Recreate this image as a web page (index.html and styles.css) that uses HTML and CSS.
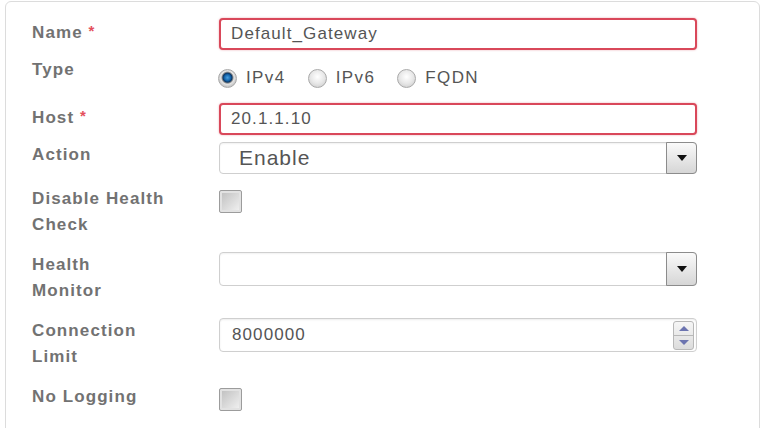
FILE: index.html
```html
<!DOCTYPE html>
<html lang="en">
<head>
    <meta charset="UTF-8">
    <meta name="viewport" content="width=device-width, initial-scale=1.0">
    <link rel="stylesheet" href="styles.css">
    <title>Server</title>
</head>
<body>
    <div class="panel">
        <form class="form">
            <div class="row">
                <label class="label">Name <span class="req">*</span></label>
                <input type="text" class="field error" value="Default_Gateway">
            </div>

            <div class="row">
                <label class="label">Type</label>
                <div class="radios">
                    <label class="radio"><input type="radio" name="type" checked>IPv4</label>
                    <label class="radio"><input type="radio" name="type">IPv6</label>
                    <label class="radio"><input type="radio" name="type">FQDN</label>
                </div>
            </div>

            <div class="row">
                <label class="label">Host <span class="req">*</span></label>
                <input type="text" class="field error" value="20.1.1.10">
            </div>

            <div class="row spaced">
                <label class="label">Action</label>
                <div class="select">
                    <span class="select-text">Enable</span>
                    <span class="select-btn"><span class="arrow"></span></span>
                </div>
            </div>

            <div class="row">
                <label class="label tall">Disable Health<br>Check</label>
                <input type="checkbox" class="check">
            </div>

            <div class="row">
                <label class="label tall">Health<br>Monitor</label>
                <div class="select big">
                    <span class="select-text"></span>
                    <span class="select-btn"><span class="arrow"></span></span>
                </div>
            </div>

            <div class="row">
                <label class="label tall">Connection<br>Limit</label>
                <div class="number">
                    <input type="text" class="number-input" value="8000000">
                    <span class="spin">
                        <span class="spin-up"></span>
                        <span class="spin-down"></span>
                    </span>
                </div>
            </div>

            <div class="row">
                <label class="label">No Logging</label>
                <input type="checkbox" class="check">
            </div>
        </form>
    </div>
</body>
</html>
```

FILE: styles.css
```css
*{
    box-sizing: border-box;
    font-family: "Liberation Sans", Arial, Helvetica, sans-serif;
}

:root{
    --label-color: #727272;
    --text-color: #555;
    --border-color: #cfcfcf;
    --error-color: #d9485a;
}

body{
    margin: 0px;
    background-color: white;
}

.panel{
    margin: 1px 3px 0 5px;
    height: 440px;
    border: 1px solid #dcdcdc;
    border-radius: 6px;
    padding: 16px 0 0 26px;
}

.row{
    display: flex;
    align-items: flex-start;
    margin-bottom: 7px;
}

.row.spaced{
    margin-bottom: 12px;
}

.label{
    width: 187px;
    flex: none;
    font-size: 17px;
    font-weight: bold;
    line-height: 26px;
    letter-spacing: 1.1px;
    color: var(--label-color);
}

.label.tall{
    padding-bottom: 7px;
}

.req{
    color: #e4505c;
    font-size: 15px;
    vertical-align: 2px;
}

.field{
    width: 478px;
    height: 32px;
    border: 1px solid var(--border-color);
    border-radius: 4px;
    padding: 0 11px;
    font-size: 17px;
    letter-spacing: 1.1px;
    color: var(--text-color);
    background-color: white;
    box-shadow: inset 0 1px 2px rgba(0, 0, 0, 0.08);
    outline: none;
}

.field.error{
    border: 2px solid var(--error-color);
    padding-left: 10px;
    box-shadow: 0 0 2px rgba(217, 72, 90, 0.5);
}

/* radio group */
.radios{
    display: flex;
    gap: 22px;
    margin: 11px 0 8px -1px;
}

.radio{
    display: flex;
    align-items: center;
    gap: 9px;
    height: 20px;
    font-size: 17px;
    letter-spacing: 1.4px;
    color: var(--text-color);
}

.radio input{
    appearance: none;
    -webkit-appearance: none;
    margin: 0;
    width: 19px;
    height: 19px;
    border-radius: 50%;
    border: 1px solid #a9a9a9;
    background: radial-gradient(circle at 50% 40%, #ffffff 0, #e8e8e8 50%, #c6c6c6 100%);
}

.radio input:checked{
    background: radial-gradient(circle at 50% 45%, #4aa0e0 0, #1667ad 3px, #0c3866 4.5px, #8e8e8e 5.5px, #e6e6e6 6.5px, #c0c0c0 9.5px);
}

/* select */
.select{
    width: 478px;
    height: 32px;
    display: flex;
    align-items: center;
    justify-content: space-between;
    border: 1px solid var(--border-color);
    border-radius: 4px;
    background-color: white;
    box-shadow: inset 0 1px 2px rgba(0, 0, 0, 0.06);
}

.select.big{
    height: 34px;
}

.select-text{
    padding-left: 19px;
    font-size: 21px;
    letter-spacing: 1px;
    color: var(--text-color);
}

.select-btn{
    align-self: stretch;
    width: 31px;
    margin: -1px -1px -1px 0;
    display: flex;
    align-items: center;
    justify-content: center;
    border: 1px solid #8c8c8c;
    border-radius: 0 4px 4px 0;
    background: linear-gradient(#fafafa, #d6d6d6);
}

.arrow{
    width: 0;
    height: 0;
    border-left: 5px solid transparent;
    border-right: 5px solid transparent;
    border-top: 6px solid #111;
}

/* number input */
.number{
    width: 478px;
    height: 34px;
    display: flex;
    align-items: center;
    border: 1px solid var(--border-color);
    border-radius: 4px;
    box-shadow: inset 0 1px 2px rgba(0, 0, 0, 0.08);
}

.number-input{
    flex: 1;
    border: none;
    outline: none;
    background: transparent;
    padding-left: 12px;
    font-size: 17px;
    letter-spacing: 1.1px;
    color: var(--text-color);
}

.spin{
    width: 21px;
    height: 29px;
    margin-right: 2px;
    display: flex;
    flex-direction: column;
    border: 1px solid #b8b8b8;
    border-radius: 3px;
    background: linear-gradient(#f6f6f6, #dcdcdc);
}

.spin-up,
.spin-down{
    flex: 1;
    display: flex;
    align-items: center;
    justify-content: center;
}

.spin-up{
    border-bottom: 1px solid #b8b8b8;
}

.spin-up::after{
    content: "";
    border-left: 5px solid transparent;
    border-right: 5px solid transparent;
    border-bottom: 5px solid #6c74b0;
}

.spin-down::after{
    content: "";
    border-left: 5px solid transparent;
    border-right: 5px solid transparent;
    border-top: 5px solid #6c74b0;
}

/* checkbox */
.check{
    appearance: none;
    -webkit-appearance: none;
    margin: 4px 0 0 0;
    width: 23px;
    height: 23px;
    border: 1px solid #9c9c9c;
    border-radius: 2px;
    background: linear-gradient(135deg, #bdbdbd, #f4f4f4);
    box-shadow: inset 0 0 0 2px #e2e2e2;
}
```
